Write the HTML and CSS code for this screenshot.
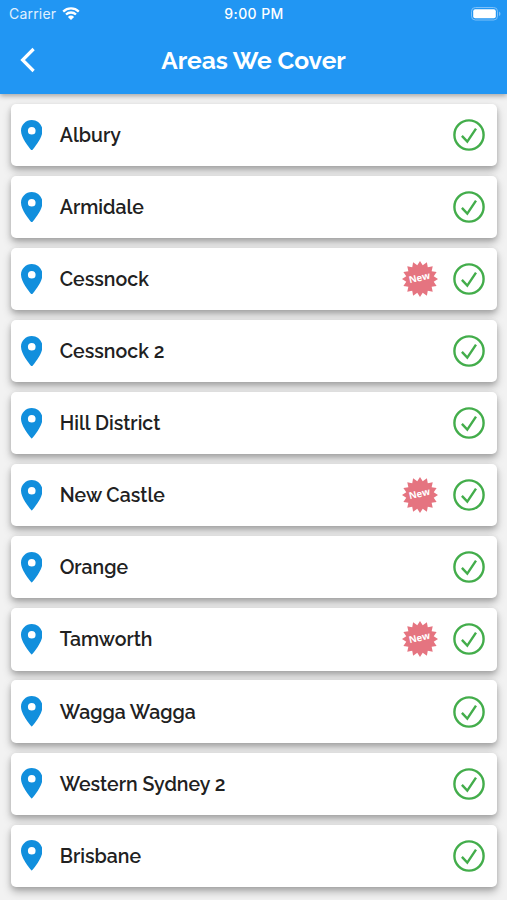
FILE: index.html
```
<!DOCTYPE html>
<html lang="en">
<head>
<meta charset="utf-8">
<title>Areas We Cover</title>
<link rel="stylesheet" href="styles.css">
</head>
<body>
<svg class="sprite" aria-hidden="true">
  <symbol id="pin" viewBox="5 2 14 20"><path d="M12 2C8.13 2 5 5.13 5 9c0 5.25 7 13 7 13s7-7.75 7-13c0-3.87-3.13-7-7-7zm0 9.5a2.5 2.5 0 0 1 0-5 2.5 2.5 0 0 1 0 5z"/></symbol>
  <symbol id="check" viewBox="0 0 32 32"><circle cx="16" cy="16" r="14.6"/><path d="M8.9 16.9 14.3 22.6 23 9.6"/></symbol>
  <symbol id="burst" viewBox="-18 -18 36 36"><path d="M0-18 2.73-13.73 6.89-16.63 7.78-11.64 12.73-12.73 11.64-7.78 16.63-6.89 13.73-2.73 18 0 13.73 2.73 16.63 6.89 11.64 7.78 12.73 12.73 7.78 11.64 6.89 16.63 2.73 13.73 0 18-2.73 13.73-6.89 16.63-7.78 11.64-12.73 12.73-11.64 7.78-16.63 6.89-13.73 2.73-18 0-13.73-2.73-16.63-6.89-11.64-7.78-12.73-12.73-7.78-11.64-6.89-16.63-2.73-13.73Z"/></symbol>
</svg>
<header class="header">
  <div class="status">
    <div class="carrier">Carrier
      <svg class="wifi" viewBox="0 0 18 13"><path d="M1.2 4.6a11.2 11.2 0 0 1 15.6 0M4 7.5a7.2 7.2 0 0 1 10 0"/><path class="dot" d="M9 13 5.9 9.9a4.4 4.4 0 0 1 6.2 0Z"/></svg>
    </div>
    <div class="time">9:00 PM</div>
    <svg class="battery" viewBox="0 0 30 14"><rect class="shell" x=".5" y=".5" width="26" height="12.5" rx="3.8"/><rect class="charge" x="2.2" y="2.2" width="22.6" height="9.1" rx="2"/><path class="tip" d="M28 4.4c2 .9 2 3.8 0 4.7Z"/></svg>
  </div>
  <div class="bar">
    <svg class="back" viewBox="0 0 16 26"><path d="M13.6 2 2.6 13l11 11"/></svg>
    <h1 class="title">Areas We Cover</h1>
  </div>
</header>
<main class="list">
  <div class="card"><svg class="pin"><use href="#pin"/></svg><span class="name">Albury</span><svg class="check"><use href="#check"/></svg></div>
  <div class="card"><svg class="pin"><use href="#pin"/></svg><span class="name">Armidale</span><svg class="check"><use href="#check"/></svg></div>
  <div class="card"><svg class="pin"><use href="#pin"/></svg><span class="name">Cessnock</span><span class="badge"><svg class="burst"><use href="#burst"/></svg><span class="new">New</span></span><svg class="check"><use href="#check"/></svg></div>
  <div class="card"><svg class="pin"><use href="#pin"/></svg><span class="name">Cessnock 2</span><svg class="check"><use href="#check"/></svg></div>
  <div class="card"><svg class="pin"><use href="#pin"/></svg><span class="name">Hill District</span><svg class="check"><use href="#check"/></svg></div>
  <div class="card"><svg class="pin"><use href="#pin"/></svg><span class="name">New Castle</span><span class="badge"><svg class="burst"><use href="#burst"/></svg><span class="new">New</span></span><svg class="check"><use href="#check"/></svg></div>
  <div class="card"><svg class="pin"><use href="#pin"/></svg><span class="name">Orange</span><svg class="check"><use href="#check"/></svg></div>
  <div class="card"><svg class="pin"><use href="#pin"/></svg><span class="name">Tamworth</span><span class="badge"><svg class="burst"><use href="#burst"/></svg><span class="new">New</span></span><svg class="check"><use href="#check"/></svg></div>
  <div class="card"><svg class="pin"><use href="#pin"/></svg><span class="name">Wagga Wagga</span><svg class="check"><use href="#check"/></svg></div>
  <div class="card"><svg class="pin"><use href="#pin"/></svg><span class="name">Western Sydney 2</span><svg class="check"><use href="#check"/></svg></div>
  <div class="card"><svg class="pin"><use href="#pin"/></svg><span class="name">Brisbane</span><svg class="check"><use href="#check"/></svg></div>
</main>
</body>
</html>
```
FILE: styles.css
```
* { box-sizing: border-box; }
body {
  margin: 0;
  height: 900px;
  overflow: hidden;
  background: #f2f2f2;
  font-family: Raleway, Lato, "Open Sans", sans-serif;
  color: #212121;
}
.sprite { position: absolute; width: 0; height: 0; }
.header {
  position: relative;
  z-index: 1;
  height: 94px;
  background: #2196f3;
  color: #fff;
  box-shadow: 0 2px 5px rgba(0, 0, 0, .32);
}
.status {
  display: grid;
  grid-template-columns: 1fr auto 1fr;
  align-items: center;
  height: 27px;
  padding: 0 8px 0 9px;
  font-family: Inter, sans-serif;
  font-size: 14px;
}
.carrier {
  display: flex;
  align-items: center;
  gap: 6px;
  color: #e0f0fe;
  letter-spacing: .2px;
}
.wifi { width: 18px; height: 13px; fill: none; stroke: #fff; stroke-width: 2.3; }
.wifi .dot { fill: #fff; stroke: none; }
.time { font-weight: 500; font-size: 14px; letter-spacing: .4px; }
.battery { width: 30px; height: 14px; justify-self: end; margin-right: -2px; }
.shell { fill: none; stroke: #7dc0f8; stroke-width: 1; }
.charge { fill: #fff; }
.tip { fill: #7dc0f8; }
.bar {
  display: grid;
  grid-template-columns: 20px 1fr 20px;
  align-items: center;
  height: 66px;
  padding: 0 20px;
}
.back { width: 16px; height: 26px; fill: none; stroke: #fff; stroke-width: 3.2; }
.title {
  margin: 2px 0 0;
  font-size: 24.5px;
  line-height: 30px;
  font-weight: 700;
  text-align: center;
  white-space: nowrap;
}
.list {
  display: flex;
  flex-direction: column;
  gap: 9.9px;
  padding: 9.8px 9.8px 0 10.6px;
}
.card {
  display: flex;
  flex: none;
  align-items: center;
  height: 62.2px;
  padding: 0 12.6px 0 10.2px;
  background: #fff;
  border-radius: 5px;
  box-shadow: 0 5px 9px rgba(0, 0, 0, .25), 0 2px 5px rgba(0, 0, 0, .14);
}
.pin { width: 21.5px; height: 30.7px; fill: #118fdd; }
.name {
  flex: 1;
  margin-left: 17.5px;
  padding-top: 2px;
  font-size: 19.5px;
  font-weight: 600;
  line-height: 24px;
}
.check { width: 32px; height: 32px; fill: none; stroke: #43ad4b; stroke-width: 2.4; }
.badge {
  display: grid;
  place-items: center;
  margin-right: 14.5px;
}
.burst, .new { grid-area: 1 / 1; }
.burst { width: 36px; height: 36px; fill: #e57480; }
.new {
  color: #fff;
  font-family: "Open Sans", sans-serif;
  font-size: 9.5px;
  font-weight: 700;
  line-height: 10px;
  transform: rotate(-13deg) translateY(-1px);
}
```
